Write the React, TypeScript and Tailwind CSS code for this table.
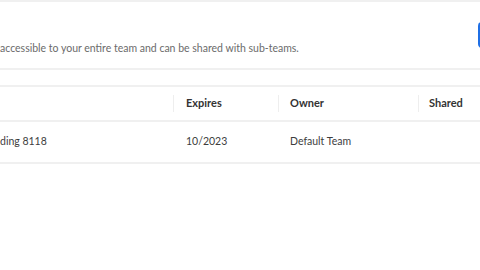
export default function App() {
  return (
    <div className="w-[480px] h-[270px] overflow-hidden bg-white font-['Lato',sans-serif]">
      <div className="h-[70px] border-t-2 border-b-2 border-[#f0f0f0] flex justify-between">
        <div className="pt-[39px]">
          <p className="text-[10.5px] leading-[14px] text-[#6b6b6b] whitespace-nowrap">
            accessible to your entire team and can be shared with sub-teams.
          </p>
        </div>
        <div className="pt-[20px] w-[2px] overflow-hidden shrink-0">
          <div className="h-[26px] w-[100px] rounded bg-[#1f6fe5]" />
        </div>
      </div>
      <div className="mt-[15px] border-t-2 border-[#f0f0f0]">
        <div className="h-[35px] flex items-center border-b-2 border-[#f0f0f0] text-[11px] font-bold text-[#333]">
          <div className="w-[173px]" />
          <div className="w-[105px] flex items-center">
            <div className="w-px h-[17px] bg-[#eeeeee]" />
            <span className="pl-[12px]">Expires</span>
          </div>
          <div className="w-[140px] flex items-center">
            <div className="w-px h-[17px] bg-[#eeeeee]" />
            <span className="pl-[11px]">Owner</span>
          </div>
          <div className="flex-1 flex items-center">
            <div className="w-px h-[17px] bg-[#eeeeee]" />
            <span className="pl-[10px]">Shared</span>
          </div>
        </div>
        <div className="h-[42px] flex items-center border-b-2 border-[#f0f0f0] text-[10.5px] text-[#3d3d3d]">
          <div className="w-[173px]">ding 8118</div>
          <div className="w-[105px] pl-[13px]">10/2023</div>
          <div className="w-[140px] pl-[12px]">Default Team</div>
          <div className="flex-1" />
        </div>
      </div>
    </div>
  );
}
